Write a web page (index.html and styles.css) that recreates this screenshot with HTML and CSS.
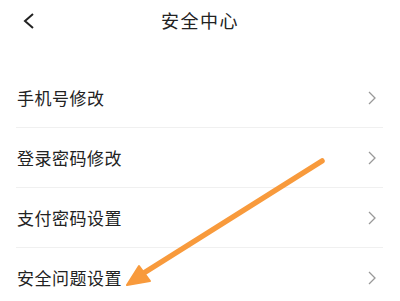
FILE: index.html
```html
<!DOCTYPE html>
<html lang="zh-CN">
<head>
<meta charset="utf-8">
<link rel="stylesheet" href="styles.css">
</head>
<body>
<div class="page">
  <header class="nav">
    <svg class="back" width="14" height="18" viewBox="0 0 14 18"><path d="M11 2 L3 9 L11 16" fill="none" stroke="#222" stroke-width="2"/></svg>
    <div class="title">安全中心</div>
  </header>
  <ul class="list">
    <li class="row"><span class="label">手机号修改</span><svg class="chev" width="8" height="14" viewBox="0 0 8 14"><path d="M1 1 L7 7 L1 13" fill="none" stroke="#999" stroke-width="1.3"/></svg></li>
    <li class="row"><span class="label">登录密码修改</span><svg class="chev" width="8" height="14" viewBox="0 0 8 14"><path d="M1 1 L7 7 L1 13" fill="none" stroke="#999" stroke-width="1.3"/></svg></li>
    <li class="row"><span class="label">支付密码设置</span><svg class="chev" width="8" height="14" viewBox="0 0 8 14"><path d="M1 1 L7 7 L1 13" fill="none" stroke="#999" stroke-width="1.3"/></svg></li>
    <li class="row"><span class="label">安全问题设置</span><svg class="chev" width="8" height="14" viewBox="0 0 8 14"><path d="M1 1 L7 7 L1 13" fill="none" stroke="#999" stroke-width="1.3"/></svg></li>
  </ul>
  <svg class="arrow" width="400" height="301" viewBox="0 0 400 301">
    <path d="M322 161 L139 276" fill="none" stroke="#f89a3c" stroke-width="5.5" stroke-linecap="round"/>
    <path d="M127 285 L139 266 L150 281 Z" fill="#f89a3c" stroke="#f89a3c" stroke-width="2" stroke-linejoin="round"/>
  </svg>
</div>
</body>
</html>
```

FILE: styles.css
```css
html, body {
  margin: 0;
  padding: 0;
  background: #fff;
}
.page {
  position: relative;
  width: 400px;
  height: 301px;
  overflow: hidden;
  font-family: "Noto Sans CJK SC", "Noto Sans", sans-serif;
  color: #222;
}
.nav {
  position: relative;
  height: 40px;
  display: flex;
  align-items: center;
  justify-content: center;
}
.back {
  position: absolute;
  left: 22px;
  top: 12px;
}
.title {
  font-size: 18px;
  letter-spacing: 1.5px;
  color: #222;
}
.list {
  list-style: none;
  margin: 28px 0 0 0;
  padding: 0 17px 0 16px;
}
.row {
  height: 59px;
  display: flex;
  align-items: center;
  justify-content: space-between;
  border-bottom: 1px solid #f0f0f0;
  padding-right: 7px;
  padding-left: 1px;
}
.row:last-child {
  border-bottom: none;
}
.label {
  font-size: 17px;
  letter-spacing: 0.5px;
  color: #222;
}
.arrow {
  position: absolute;
  left: 0;
  top: 0;
}
```
